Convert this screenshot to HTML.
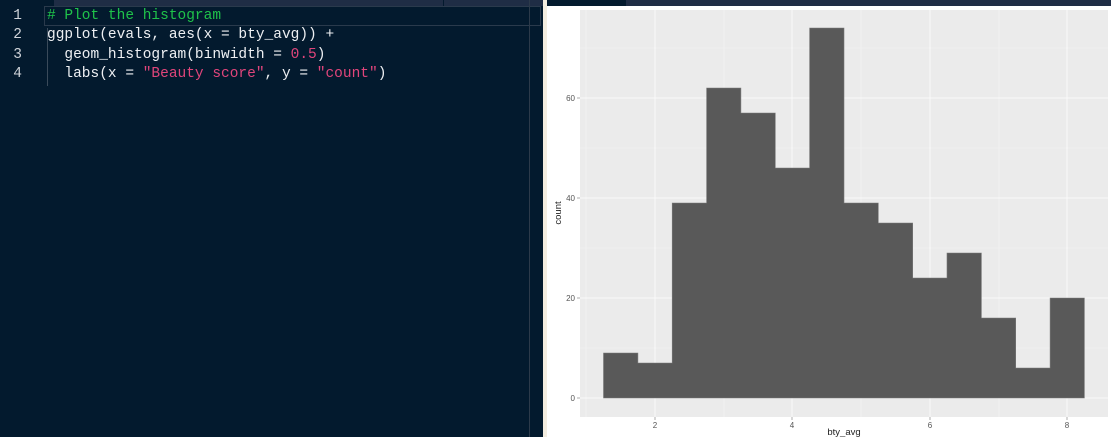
<!DOCTYPE html>
<html><head><style>
html,body{margin:0;padding:0;width:1111px;height:437px;overflow:hidden;background:#fff;}
.ed{position:absolute;left:0;top:0;width:543px;height:437px;background:#031a2e;}
.tb{position:absolute;top:0;height:6px;background:#1f2d45;}
.hl{position:absolute;left:44px;top:6px;width:497px;height:20px;border:1px solid #2a3a4c;box-sizing:border-box;}
.vs{position:absolute;left:529px;top:0;width:1px;height:437px;background:#2c3a4a;}
.ln{position:absolute;left:0;width:30px;text-align:right;color:#d0d4da;}
.cd{position:absolute;left:47px;color:#eef0f3;white-space:pre;}
.ln,.cd{font-family:"Liberation Mono",monospace;font-size:14.5px;line-height:20px;}
.c{color:#1fc24a}.s{color:#e0457b}.n{color:#e0457b}
.guide{position:absolute;left:47px;top:28px;width:1px;height:58px;background:#3a4a5a;}
.bg{position:absolute;left:543px;top:0;width:4px;height:437px;background:#f3ede0;}
</style></head><body>
<div class="ed">
 <div class="tb" style="left:54px;width:389px"></div>
 <div class="tb" style="left:444px;width:99px"></div>
 <div class="hl"></div>
 <div class="vs"></div>
 <div class="guide"></div>
 <div class="ln" style="top:6px;left:-8px">1</div>
 <div class="ln" style="top:25px;left:-8px">2</div>
 <div class="ln" style="top:45px;left:-8px">3</div>
 <div class="ln" style="top:64px;left:-8px">4</div>
 <div class="cd c" style="top:6px"># Plot the histogram</div>
 <div class="cd" style="top:25px">ggplot(evals, aes(x = bty_avg)) +</div>
 <div class="cd" style="top:45px">  geom_histogram(binwidth = <span class="n">0.5</span>)</div>
 <div class="cd" style="top:64px">  labs(x = <span class="s">"Beauty score"</span>, y = <span class="s">"count"</span>)</div>
</div>
<div class="bg"></div>
<div style="position:absolute;left:547px;top:0;width:79px;height:6px;background:#031a2e"></div>
<div style="position:absolute;left:626px;top:0;width:485px;height:6px;background:#1f2d45"></div>
<svg style="position:absolute;left:0;top:0" width="1111" height="437" font-family="Liberation Sans, sans-serif">
 <rect x="580" y="10" width="528" height="407" fill="#ebebeb"/>
 <g stroke="#f3f3f3" stroke-width="0.6">
  <line x1="586" y1="10" x2="586" y2="417"/><line x1="724" y1="10" x2="724" y2="417"/>
  <line x1="861" y1="10" x2="861" y2="417"/><line x1="999" y1="10" x2="999" y2="417"/>
  <line x1="580" y1="48" x2="1108" y2="48"/><line x1="580" y1="148" x2="1108" y2="148"/>
  <line x1="580" y1="248" x2="1108" y2="248"/><line x1="580" y1="348" x2="1108" y2="348"/>
 </g>
 <g stroke="#fafafa" stroke-width="1">
  <line x1="655" y1="10" x2="655" y2="417"/><line x1="792" y1="10" x2="792" y2="417"/>
  <line x1="930" y1="10" x2="930" y2="417"/><line x1="1067" y1="10" x2="1067" y2="417"/>
  <line x1="580" y1="98" x2="1108" y2="98"/><line x1="580" y1="198" x2="1108" y2="198"/>
  <line x1="580" y1="298" x2="1108" y2="298"/><line x1="580" y1="398" x2="1108" y2="398"/>
 </g>
 <path fill="#595959" stroke="#7a7a7a" stroke-width="0.6" d="M603.5 398 V353 H637.9 V363 H672.2 V203 H706.6 V88 H740.9 V113 H775.3 V168 H809.6 V28 H844 V203 H878.3 V223 H912.7 V278 H947 V253 H981.4 V318 H1015.7 V368 H1050.1 V298 H1084.4 V398 Z"/>
 <g stroke="#999" stroke-width="0.8">
  <line x1="577" y1="98" x2="580" y2="98"/><line x1="577" y1="198" x2="580" y2="198"/>
  <line x1="577" y1="298" x2="580" y2="298"/><line x1="577" y1="398" x2="580" y2="398"/>
  <line x1="655" y1="417" x2="655" y2="420"/><line x1="792" y1="417" x2="792" y2="420"/>
  <line x1="930" y1="417" x2="930" y2="420"/><line x1="1067" y1="417" x2="1067" y2="420"/>
 </g>
 <g font-size="8" fill="#555" text-anchor="end">
  <text x="575" y="101">60</text><text x="575" y="201">40</text>
  <text x="575" y="301">20</text><text x="575" y="401">0</text>
 </g>
 <g font-size="8" fill="#555" text-anchor="middle">
  <text x="655" y="428">2</text><text x="792" y="428">4</text>
  <text x="930" y="428">6</text><text x="1067" y="428">8</text>
 </g>
 <text x="844" y="435" font-size="9.5" fill="#222" text-anchor="middle">bty_avg</text>
 <text x="0" y="0" font-size="9.5" fill="#222" text-anchor="middle" transform="translate(561,213) rotate(-90)">count</text>
</svg>
</body></html>
